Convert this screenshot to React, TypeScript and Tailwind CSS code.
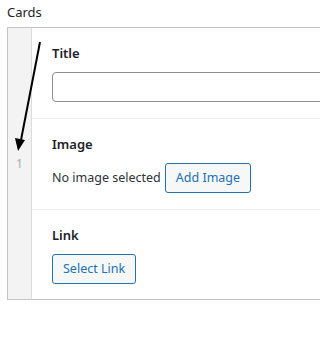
import React from "react";

export default function App() {
  const font = { fontFamily: '"Segoe UI", "Noto Sans", "Open Sans", sans-serif' };
  return (
    <div className="relative w-[320px] h-[342px] overflow-hidden bg-white text-[#1d2327]" style={font}>
      <div className="pl-[7px] pt-[2px] text-[13px] leading-[20px]">Cards</div>
      <div className="mt-[5px] ml-[7px] w-[400px] flex border border-[#c3c4c7] border-r-0">
        <div className="w-[24px] bg-[#f3f3f3] border-r border-[#dcdcde] flex items-center justify-center">
          <span className="text-[12px] text-[#a7aaad] leading-none">1</span>
        </div>
        <div className="flex-1 flex flex-col">
          <div className="h-[91px] px-[20px] pt-[16px] border-b border-[#eeeeee]">
            <div className="text-[13px] font-semibold leading-[18px]">Title</div>
            <div className="mt-[10px] h-[30px] rounded-[4px] border border-[#8c8f94] bg-white" />
          </div>
          <div className="h-[91px] px-[20px] pt-[16px] border-b border-[#eeeeee]">
            <div className="text-[13px] font-semibold leading-[18px]">Image</div>
            <div className="mt-[10px] flex items-center gap-[4px]">
              <span className="text-[12.5px] text-[#2c3338]">No image selected</span>
              <button className="h-[30px] px-[10px] rounded-[3px] border border-[#2271b1] bg-[#f6f7f7] text-[#2271b1] text-[12.5px] leading-none">
                Add Image
              </button>
            </div>
          </div>
          <div className="h-[89px] px-[20px] pt-[16px]">
            <div className="text-[13px] font-semibold leading-[18px]">Link</div>
            <div className="mt-[10px]">
              <button className="h-[30px] px-[10px] rounded-[3px] border border-[#2271b1] bg-[#f6f7f7] text-[#2271b1] text-[12.5px] leading-none">
                Select Link
              </button>
            </div>
          </div>
        </div>
      </div>
      <svg className="absolute left-0 top-0 pointer-events-none" width="320" height="342">
        <line x1="40" y1="42" x2="21" y2="140" stroke="black" strokeWidth="2" />
        <polygon points="18,151 15,138 25,140" fill="black" />
      </svg>
    </div>
  );
}
